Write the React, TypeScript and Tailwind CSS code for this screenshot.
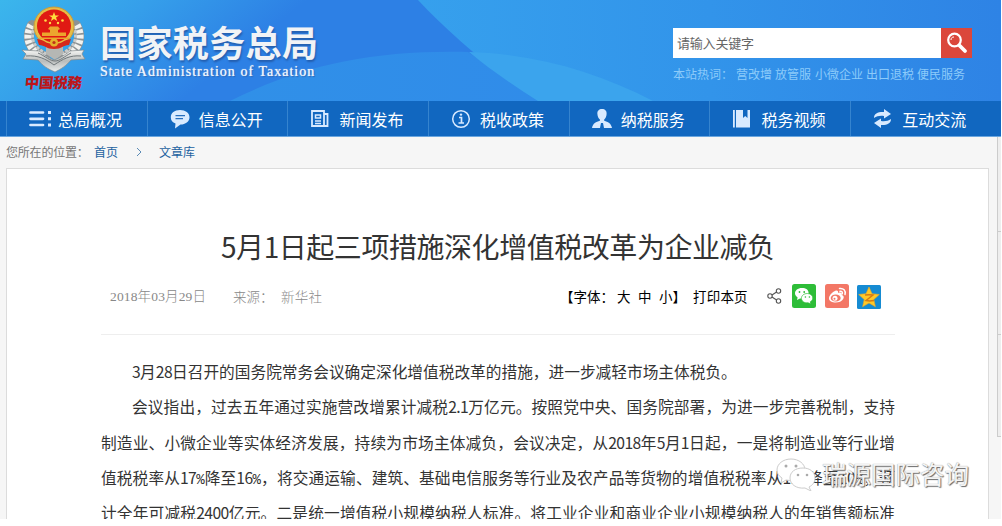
import React from 'react';

const cjk = "font-['Noto_Sans_CJK_SC',sans-serif]";

function Emblem() {
  return (
    <svg width="64" height="70" viewBox="0 0 64 70" className="block">
      <defs>
        <linearGradient id="silver" x1="0" y1="0" x2="0" y2="1">
          <stop offset="0" stopColor="#f7f7f5" />
          <stop offset=".5" stopColor="#b9bcbb" />
          <stop offset="1" stopColor="#eceeee" />
        </linearGradient>
      </defs>
      <g fill="none" strokeLinecap="round">
        <path d="M10 21C3 34 8 47 23 53M54 21C61 34 56 47 41 53" stroke="#8d9294" strokeWidth="10" />
        <path d="M9 21C2 34 7 47 22 53M55 21C62 34 57 47 42 53" stroke="#f2f2ef" strokeWidth="7" strokeDasharray="3.6 1.6" strokeLinecap="butt" />
        <path d="M13 22C7 35 12 44 25 50M51 22C57 35 52 44 39 50" stroke="#c9cbca" strokeWidth="3" strokeDasharray="3 1.500" strokeLinecap="butt" />
      </g>
      <path d="M24 42h17v8l-8 6-9-6z" fill="#b5b7b4" />
      <path d="M0 46l17 1c5 4 10 7 15 9 6-2 11-5 16-9l14-1-2 4 3 5-14 1c-5 6-10 9-16 12-7-3-12-6-17-12l-15-1 3-5z" fill="url(#silver)" stroke="#83898c" strokeWidth=".7" />
      <path d="M4 52c12-1 20 3 28 9 9-6 16-10 27-9M16 49c7 3 12 8 17 8s10-5 16-8" fill="none" stroke="#71787b" strokeWidth="1" />
      <ellipse cx="32" cy="22.500" rx="20" ry="19.500" fill="#e7bd45" stroke="#c99b3a" />
      <ellipse cx="32" cy="22" rx="17" ry="16.500" fill="#e01913" />
      <path d="M32 8l1.300 3.400H37l-3 2.200 1.200 3.500-3.200-2.200-3.100 2.200 1.100-3.500-3-2.200h3.700z" fill="#ffdd3d" />
      <g fill="#ffdc45"><circle cx="23.500" cy="16.500" r="1.300" /><circle cx="28" cy="19" r="1.200" /><circle cx="36" cy="19" r="1.200" /><circle cx="40.500" cy="16.500" r="1.300" /></g>
      <path d="M26 25l2-2.500h8l2 2.500-2 1v2.500h8V32H20v-3.500h8V26zM17 33.500h30v1.500H17z" fill="#eca52e" />
      <path d="M15 35c9 1 8 5 17 5s8-4 17-5l-2 6c-6 0-7 4-15 4s-9-4-15-4z" fill="#d6281c" />
      <circle cx="32" cy="38.500" r="4" fill="#e5b22c" /><circle cx="32" cy="38.500" r="1.600" fill="#bf3218" />
    </svg>
  );
}

function NavIcon({ kind }: { kind: number }) {
  return (
    <svg width="20" height="20" viewBox="0 0 20 20" fill="none" stroke="#d9eaff" strokeWidth="2" className="block shrink-0 overflow-visible">
      {kind === 0 && <><path d="M1.500 3.500h12.500M1.500 9.800h12.500M1.500 16h12.500" strokeWidth="2.700" strokeLinecap="round" /><path d="M19 3.500h3M19 9.800h3M19 16h3" strokeWidth="3" /></>}
      {kind === 1 && <><path d="M10 1c5.500 0 9.500 3 9.500 7.200S15.500 15.500 10.500 15.500l-5.500 4 .5-5C2.500 13.500.8 11.500.8 8.200.8 4 4.500 1 10 1z" fill="#d9eaff" stroke="none" /><path d="M5.500 6.700h9.500M5.500 9.700h7.500" stroke="#286fbe" strokeWidth="1.200" /></>}
      {kind === 2 && <><path d="M2 2h12v15H2zM14 5h3.500v12H5" strokeWidth="1.800" /><path d="M5.500 6h5v3h-5zM5 12h6M5 14.500h6" strokeWidth="1.500" /></>}
      {kind === 3 && <><circle cx="10" cy="10" r="8.300" strokeWidth="1.500" /><path d="M8 8.500h2.500V14M7.500 14h5.500" strokeWidth="1.700" /><circle cx="10" cy="5.600" r="1.200" fill="#d9eaff" stroke="none" /></>}
      {kind === 4 && <path d="M10 0c-3 0-5 2-4.600 5 .2 2.500 1 4.400 2.500 5.500v1.300C4 13.300 1 14 0 19h8l1-5h2l1 5h8c-1-5-4-5.700-7.800-7.200v-1.300C13.600 9.400 14.500 7.500 14.600 5 15 2 13 0 10 0z" fill="#d9eaff" stroke="none" />}
      {kind === 5 && <path d="M1 1h1.800v17.500H1zM4 1h7v8l2.200-2L15.500 9V1H18v17.500H4z" fill="#d9eaff" stroke="none" />}
      {kind === 6 && <g fill="#d9eaff" stroke="none"><path d="M1 9c0-4.500 4-6.300 10-6V0l7 5-7 4.500V7C7 6.500 4 7 1 9z" /><path d="M18 10c0 4.500-4 6.300-10 6v3l-7-5 7-4.500V12c4 .5 7 0 10-2z" /></g>}
    </svg>
  );
}

const nav = ['总局概况', '信息公开', '新闻发布', '税收政策', '纳税服务', '税务视频', '互动交流'];

function WechatMark({ className }: { className: string }) {
  return (
    <svg viewBox="0 0 24 24" className={className}>
      <rect width="24" height="24" rx="2.500" fill="#2ebd38" />
      <path d="M10 4C5.600 4 3 6.500 3 9.300c0 1.700 1 3.200 2.600 4.100L5 16l3-1.500c5 .8 8.600-2 8.600-5.300S14 4 10 4z" fill="#fff" />
      <path d="M15.400 9.500c-3.600 0-6 2.200-6 4.800s2.700 5 6.700 4.500l2.700 1.300-.6-2.200c1.600-1 2.600-2.200 2.600-3.900 0-2.300-2.200-4.500-5.400-4.500z" fill="#fff" stroke="#2ebd38" strokeWidth=".7" />
      <g fill="#2ebd38"><circle cx="7.500" cy="8" r=".9" /><circle cx="12.200" cy="8" r=".9" /><circle cx="13.400" cy="13" r=".8" /><circle cx="17.400" cy="13" r=".8" /></g>
    </svg>
  );
}

function ShareIcons() {
  return (
    <div className="flex h-[26px] items-center">
      <svg width="15" height="16" viewBox="0 0 15 16" fill="none" stroke="#555" strokeWidth="1.100" className="-mt-[2px]"><circle cx="3" cy="8" r="2.200" /><circle cx="11.500" cy="3" r="2.200" /><circle cx="11.500" cy="13" r="2.200" /><path d="M5 7l4.600-3M5 9l4.600 3" /></svg>
      <WechatMark className="-mt-[2px] ml-[10px] h-6 w-6" />
      <svg viewBox="0 0 24 24" className="-mt-[2px] ml-[9px] h-6 w-6">
        <rect width="24" height="24" rx="2.500" fill="#f37766" />
        <path d="M10 7c2-1 3.500-.3 3 2 3-1 4.500 0 3.700 2 2 .6 2.600 2 1.500 4-2.700 5-14 4.500-14.200-.5C4 11.500 7 8.300 10 7z" fill="#fff" />
        <ellipse cx="10.700" cy="14" rx="5" ry="3.600" fill="#f37766" /><circle cx="10" cy="14.300" r="2.500" fill="#fff" /><circle cx="9.500" cy="14.800" r="1" fill="#f37766" />
        <path d="M14.500 4.500c4-.5 6.500 2 5.500 6M15 7.300c1.700-.2 2.700.8 2.300 2.500" fill="none" stroke="#fff" strokeWidth="1.500" strokeLinecap="round" />
      </svg>
      <svg viewBox="0 0 24 24" className="ml-2 h-6 w-6">
        <rect width="24" height="24" rx="1.500" fill="#168bd2" />
        <path d="M12 2l3 6.700 7.300.8-5.500 5 1.600 7.200L12 18l-6.400 3.700 1.600-7.200-5.500-5L9 8.700z" fill="#ffc928" stroke="#f0a91c" strokeWidth=".6" />
        <path d="M8 10c3-.5 5-.5 8 0l-7 5.500c3 .7 5 .6 8 0" fill="none" stroke="#d67a13" strokeWidth="1.500" />
      </svg>
    </div>
  );
}

const lines: { text: string; width: string }[] = [
  { text: '3月28日召开的国务院常务会议确定深化增值税改革的措施，进一步减轻市场主体税负。', width: 'ml-[31px] w-[605px]' },
  { text: '会议指出，过去五年通过实施营改增累计减税2.1万亿元。按照党中央、国务院部署，为进一步完善税制，支持', width: 'ml-[31px] w-[763px] [text-align-last:justify]' },
  { text: '制造业、小微企业等实体经济发展，持续为市场主体减负，会议决定，从2018年5月1日起，一是将制造业等行业增', width: 'w-[794px] [text-align-last:justify]' },
  { text: '值税税率从17%降至16%，将交通运输、建筑、基础电信服务等行业及农产品等货物的增值税税率从11%降至10%，预', width: 'w-[794px] [text-align-last:justify]' },
  { text: '计全年可减税2400亿元。二是统一增值税小规模纳税人标准。将工业企业和商业企业小规模纳税人的年销售额标准', width: 'w-[794px] [text-align-last:justify]' },
];

function BodyText({ text }: { text: string }) {
  return (
    <>
      {text.split(/([0-9.]+|%)/).map((part, i) => {
        if (part === '%') return <span key={i} className="font-['Liberation_Mono',monospace] text-[14px]">{part}</span>;
        return i % 2 === 1 ? <span key={i} className="tracking-[-0.600px]">{part}</span> : part;
      })}
    </>
  );
}

export default function App() {
  return (
    <div className={`relative h-[526px] w-[1002px] overflow-hidden bg-white ${cjk}`}>
      <div className="flex h-[519px] w-[1001px] flex-col overflow-hidden bg-[#f6f6f6]">
        <header className="relative h-[101px] shrink-0 overflow-hidden">
          <svg width="1001" height="101" viewBox="0 0 1001 101" className="absolute inset-0">
            <defs>
              <linearGradient id="left" gradientUnits="userSpaceOnUse" x1="0" y1="0" x2="120" y2="150"><stop stopColor="#3bb6ec" /><stop offset=".5" stopColor="#359eea" /><stop offset="1" stopColor="#2d80e5" /></linearGradient>
              <linearGradient id="right" x1="0" x2="1"><stop stopColor="#36a0ed" /><stop offset=".5" stopColor="#3294ea" /><stop offset="1" stopColor="#2e83e5" /></linearGradient>
              <linearGradient id="low" x1="0" x2="1"><stop stopColor="#3090e8" /><stop offset="1" stopColor="#308ce9" /></linearGradient>
            </defs>
            <path d="M0 0h1001v101H0z" fill="url(#left)" />
            <path d="M230 101C300 66 370 50 468 52l70 49z" fill="url(#low)" />
            <path d="M418 0h583v101H538C494 72 450 34 418 0z" fill="url(#right)" />
            <path d="M469 52c68 2 128 20 184 49H538c-25-16-49-32-69-49z" fill="#3ba4ed" />
          </svg>
          <div className="relative flex h-full">
            <div className="ml-[22px] mt-[4px] w-[64px]">
              <Emblem />
              <div className="-mt-[3px] ml-[3px] origin-left -skew-x-6 whitespace-nowrap text-[14.500px] font-black leading-[21px] tracking-[-0.300px] text-[#be1519]">中国税務</div>
            </div>
            <div className="ml-[14px] mt-[19px] w-[220px]">
              <div className="h-[45px] whitespace-nowrap text-[36px] font-bold leading-[44px] tracking-[0.400px] text-[#f1f3f6] [text-shadow:1px_2px_2px_#245eaf]">国家税务总局</div>
              <div className="whitespace-nowrap font-['Liberation_Serif',serif] text-[14px] leading-[16px] tracking-[1.020px] text-[#eff5fc] [text-shadow:0_0_1px_#e7f0fb,1px_1px_1px_#245eaf]">State Administration of Taxation</div>
            </div>
            <div className="ml-[353px] mt-[28px] w-[299px]">
              <div className="flex h-[30px]">
                <div className="w-[268px] bg-white pl-[4px] text-[13px] leading-[29px] tracking-[-0.200px] text-[#666]">请输入关键字</div>
                <div className="flex w-[31px] items-center justify-center bg-[#db473b]">
                  <svg width="22" height="22" viewBox="0 0 22 22" fill="none" stroke="#fff"><circle cx="8.500" cy="8" r="6.300" strokeWidth="2.200" /><path d="M13.500 13.500l5.500 5.500" strokeWidth="3.800" strokeLinecap="round" /><path d="M5 8c0-2 1-3 3-3" strokeWidth="1" /></svg>
                </div>
              </div>
              <div className="mt-[6px] flex whitespace-nowrap text-[12px] leading-[20px] text-[#8ccbfa]">
                <span className="w-[63px]">本站热词：</span><span className="w-[39px]">营改增</span><span className="w-[40px]">放管服</span><span className="w-[51px]">小微企业</span><span className="w-[51px]">出口退税</span><span>便民服务</span>
              </div>
            </div>
          </div>
        </header>
        <nav className="flex h-[36px] shrink-0 border-b border-[#6aa6df] bg-[#1167c0] pl-[6px]">
          {nav.map((name, i) => (
            <div key={name} className="flex w-[140.700px] shrink-0 items-center border-l border-[#3584cf] pl-[22px]">
              <NavIcon kind={i} />
              <span className="ml-[9px] whitespace-nowrap pt-[2px] text-[16px] leading-[33px] text-white">{name}</span>
            </div>
          ))}
        </nav>
        <div className="flex min-h-0 grow">
          <div className="w-[997px] shrink-0">
            <div className="flex h-[31px] items-center whitespace-nowrap pb-[2px] pl-[6px] text-[12px] text-[#1d62a0]">
              <span className="w-[88px] tracking-[-0.200px] text-[#777]">您所在的位置：</span><span className="w-[42px]">首页</span>
              <svg width="7" height="10" viewBox="0 0 7 10" fill="none" stroke="#5b8bb5"><path d="M1 1l4 4-4 4" /></svg>
              <span className="ml-[16px]">文章库</span>
            </div>
            <main className="ml-[6px] h-[351px] w-[983px] border border-b-0 border-[#dcdcdc] bg-white pl-[94px] pt-[57px]">
              <h1 className="ml-[120px] h-[42px] whitespace-nowrap text-[28px] leading-[40px] tracking-[-0.450px] text-[#333]">5月1日起三项措施深化增值税改革为企业减负</h1>
              <div className="flex h-[67px] w-[794px] border-b border-[#eee] pt-[16px]">
                <div className="ml-[9px] flex h-[24px] w-[453px] items-center whitespace-nowrap text-[13.500px] font-light text-[#888]">
                  <span className="w-[123px] pt-[2px] font-['Liberation_Serif','Noto_Sans_CJK_SC',serif] tracking-[0.150px]">2018年03月29日</span><span className="w-[48px]">来源：</span><span className="tracking-[0.300px]">新华社</span>
                </div>
                <div className="flex h-6 w-[204px] items-center whitespace-nowrap text-[13.500px] text-black">
                  <span className="-ml-[3px] w-[57px]">【字体：</span><span className="w-[21px]">大</span><span className="w-[21px]">中</span><span className="w-[34px]">小】</span><span className="tracking-[0.200px]">打印本页</span>
                </div>
                <ShareIcons />
              </div>
              <article className="mt-[19px] text-[15.700px] text-[#333]">
                {lines.map((line) => <div key={line.text} className={`h-[35.300px] whitespace-nowrap leading-[35.300px] ${line.width}`}><BodyText text={line.text} /></div>)}
              </article>
            </main>
          </div>
          <div className="flex h-[300px] w-[4px] flex-col border-b border-l border-[#ccc] bg-[#eee]">
            <div className="h-[95px] border-b border-[#ccc]" />
            <div className="h-[103px] border-b border-[#ccc]" />
          </div>
        </div>
      </div>
      <div className="absolute left-[776px] top-[457px] flex items-center">
        <svg width="42" height="34" viewBox="0 0 42 34" fill="#fff" stroke="#ccc" strokeWidth="1"><path d="M15 2C7 2 1 7 1 13c0 4 2 6 5 8l-1 5 5-3c10 2 19-2 19-10C29 7 23 2 15 2z" /><path d="M27 11c-8 0-13 4-13 10s6 11 15 10l6 3-2-4c4-2 6-5 6-9 0-6-5-10-12-10z" /><g fill="#aaa" stroke="none"><circle cx="10" cy="9" r="1.500" /><circle cx="20" cy="9" r="1.500" /><circle cx="22" cy="18" r="1.300" /><circle cx="31" cy="18" r="1.300" /></g></svg>
        <span className="ml-[4px] whitespace-nowrap text-[24.500px] leading-[34px] text-[#f4f4f4] [text-shadow:0_0_1px_#888,1px_1px_1px_#666]">瑞源国际咨询</span>
      </div>
    </div>
  );
}
